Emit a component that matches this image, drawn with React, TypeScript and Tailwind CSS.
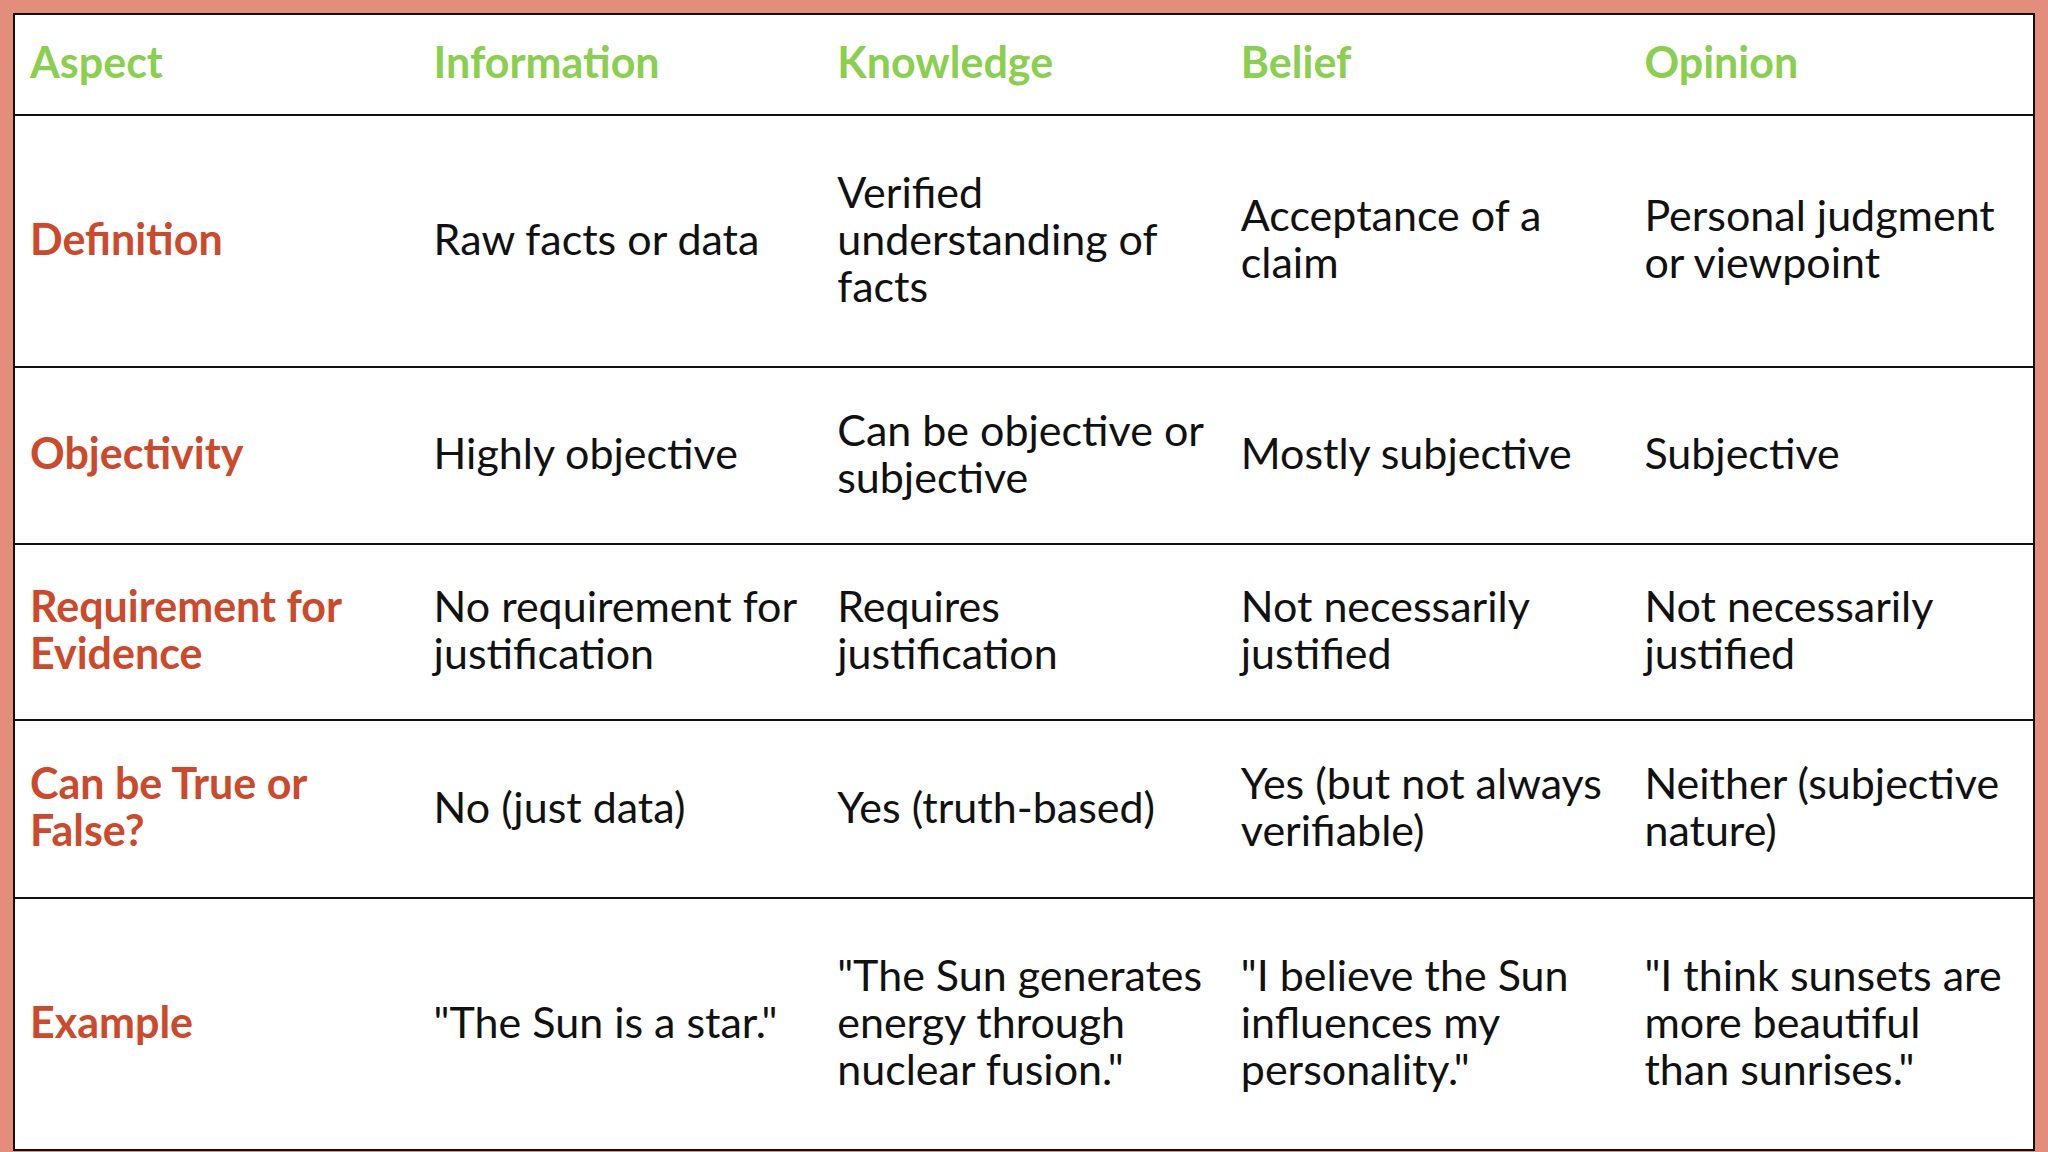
import React from "react";

const header = ["Aspect", "Information", "Knowledge", "Belief", "Opinion"];

const rows: { h: string; cells: string[] }[] = [
  {
    h: "h-[252px]",
    cells: [
      "Definition",
      "Raw facts or data",
      "Verified understanding of facts",
      "Acceptance of a claim",
      "Personal judgment or viewpoint",
    ],
  },
  {
    h: "h-[177px]",
    cells: [
      "Objectivity",
      "Highly objective",
      "Can be objective or subjective",
      "Mostly subjective",
      "Subjective",
    ],
  },
  {
    h: "h-[176px]",
    cells: [
      "Requirement for Evidence",
      "No requirement for justification",
      "Requires justification",
      "Not necessarily justified",
      "Not necessarily justified",
    ],
  },
  {
    h: "h-[178px]",
    cells: [
      "Can be True or False?",
      "No (just data)",
      "Yes (truth-based)",
      "Yes (but not always verifiable)",
      "Neither (subjective nature)",
    ],
  },
  {
    h: "flex-1",
    cells: [
      "Example",
      '"The Sun is a star."',
      '"The Sun generates energy through nuclear fusion."',
      '"I believe the Sun influences my personality."',
      '"I think sunsets are more beautiful than sunrises."',
    ],
  },
];

export default function App() {
  return (
    <div
      className="w-[2048px] h-[1152px] bg-[#e38e7d] pt-[13px] px-[13px] overflow-hidden"
      style={{ fontFamily: "Lato, 'Open Sans', sans-serif" }}
    >
      <div className="h-[1138px] bg-white border-2 border-[#111] flex flex-col">
        <div className="h-[101px] grid grid-cols-5 border-b-2 border-[#111] items-center">
          {header.map((t) => (
            <div
              key={t}
              className="pl-[15px] pr-[22px] pb-[6px] text-[43px] leading-[47px] font-bold text-[#8bcf4f]"
            >
              {t}
            </div>
          ))}
        </div>
        {rows.map((r, i) => (
          <div
            key={i}
            className={`${r.h} grid grid-cols-5 items-center ${
              i < rows.length - 1 ? "border-b-2 border-[#111]" : ""
            }`}
          >
            {r.cells.map((c, j) => (
              <div
                key={j}
                className={`pl-[15px] pr-[22px] pb-[6px] text-[43px] leading-[47px] ${
                  j === 0 ? "font-bold text-[#cc4a2b]" : "text-[#111]"
                }`}
              >
                {c}
              </div>
            ))}
          </div>
        ))}
      </div>
    </div>
  );
}
